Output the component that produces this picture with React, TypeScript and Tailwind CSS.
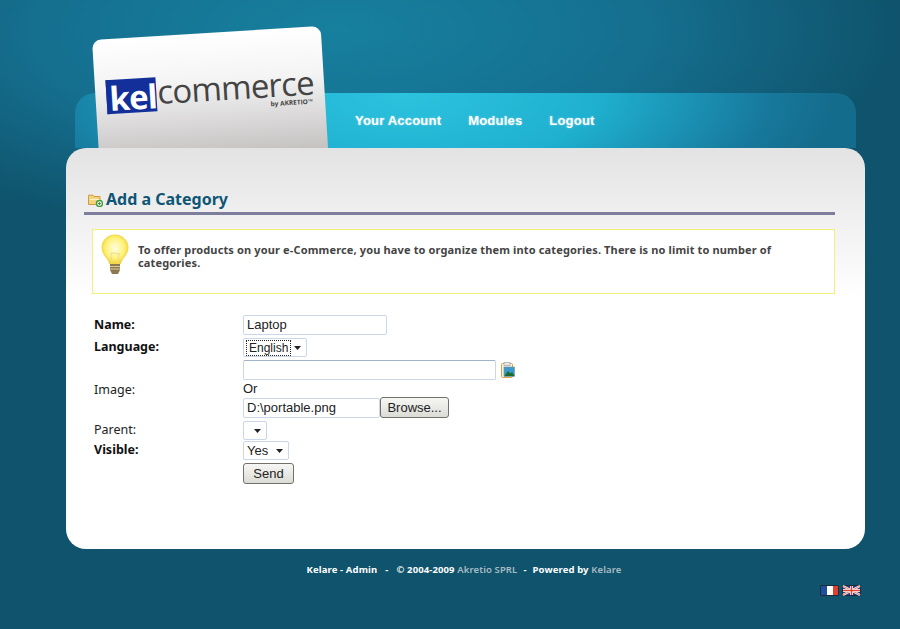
const tahoma = "font-['Noto_Sans','Liberation_Sans',sans-serif]";

function Caret() {
  return (
    <svg width="7" height="4" viewBox="0 0 7 4" className="shrink-0">
      <path d="M0 0h7L3.5 4z" fill="#222" />
    </svg>
  );
}

function SelectBox({ value, focused, className }: { value?: string; focused?: boolean; className: string }) {
  return (
    <div className={`flex h-[19px] items-center justify-between rounded-[2px] border border-[#c9d7e8] bg-white pl-[2px] pr-[5px] text-[13px] leading-none text-[#222] ${className}`}>
      <span className={focused ? "border border-dotted border-[#222] px-[2px] py-[1px] text-[12px]" : "px-[1px]"}>{value}</span>
      <Caret />
    </div>
  );
}

function GreyButton({ label, className }: { label: string; className: string }) {
  return (
    <button
      type="button"
      className={`rounded-[3px] border border-[#70706c] bg-[linear-gradient(#f6f6f4,#dcdcd6)] text-[13px] leading-none text-[#222] ${className}`}
    >
      {label}
    </button>
  );
}

function FolderIcon() {
  return (
    <svg width="15" height="13" viewBox="0 0 15 13" className="mt-[3px] shrink-0">
      <path d="M.5 2.5V1.2h4.5l1 1.3h6v8H.5z" fill="#f5d27c" stroke="#d09a3c" />
      <path d="M1.5 5h10v1H1.5z" fill="#fff3c8" />
      <circle cx="11.5" cy="9.5" r="3" fill="#fff" stroke="#3f9a3a" strokeWidth="1.4" />
      <path d="M11.5 8v3M10 9.5h3" stroke="#3f9a3a" />
    </svg>
  );
}

function BulbIcon() {
  return (
    <svg width="28" height="42" viewBox="0 0 28 42" className="shrink-0">
      <defs>
        <radialGradient id="bulb" cx="50%" cy="45%" r="55%">
          <stop offset="0%" stopColor="#fffde0" />
          <stop offset="65%" stopColor="#fff27a" />
          <stop offset="100%" stopColor="#f0d030" />
        </radialGradient>
      </defs>
      <path
        d="M14 1C6.500 1 1 6.500 1 13.500c0 5 2.500 7.500 5 11 1.500 2 2 3.500 2.500 5.500h11c.5-2 1-3.500 2.500-5.500 2.500-3.500 5-6 5-11C27 6.500 21.500 1 14 1z"
        fill="url(#bulb)"
        stroke="#f3da4a"
      />
      <path d="M11 30l-1-11M17 30l1-11M10 19c1.500 1.500 2.500-1 4 0s2.500 1.500 4 0" fill="none" stroke="#e8dc9a" />
      <path d="M9 30h10v6l-2 4h-6l-2-4z" fill="#8d7a52" />
      <path d="M9 32.500h10M9 35h10" stroke="#d8c894" />
    </svg>
  );
}

function ImagePickIcon() {
  return (
    <svg width="14" height="16" viewBox="0 0 14 16" className="shrink-0">
      <rect x=".5" y="1.500" width="11" height="14" rx="1" fill="#f3f0e2" stroke="#d9a64a" />
      <rect x="3" y=".5" width="6" height="3" fill="#e8e8e8" stroke="#999" strokeWidth=".6" />
      <rect x="3" y="5" width="10.500" height="9.500" fill="#3a9ad0" stroke="#7d8f88" strokeWidth=".6" />
      <path d="M3.500 14l3.500-5 2.500 2.500 1.500-1.500 2.500 4z" fill="#1e6a2c" />
    </svg>
  );
}

function Flags() {
  return (
    <div className="flex justify-end gap-[3px] pr-[4px]">
      <svg width="19" height="11" viewBox="0 0 19 11">
        <rect width="19" height="11" rx="1.500" fill="#1d2a3c" />
        <rect x="1" y="1" width="6" height="9" fill="#1c4fa0" />
        <rect x="7" y="1" width="6" height="9" fill="#fff" />
        <rect x="13" y="1" width="5" height="9" fill="#e0402c" />
      </svg>
      <svg width="19" height="11" viewBox="0 0 19 11">
        <rect width="19" height="11" rx="1.500" fill="#1d2a3c" />
        <rect x="1" y="1" width="17" height="9" fill="#2a3f80" />
        <path d="M1 1l17 9M18 1L1 10" stroke="#fff" strokeWidth="2" />
        <path d="M1 1l17 9M18 1L1 10" stroke="#e0402c" strokeWidth=".7" />
        <path d="M9.500 1v9M1 5.500h17" stroke="#fff" strokeWidth="3" />
        <path d="M9.500 1v9M1 5.500h17" stroke="#e0402c" strokeWidth="1.500" />
      </svg>
    </div>
  );
}

function LogoCard() {
  return (
    <div className="absolute left-[26px] top-[-53px] h-[135px] w-[229px] origin-top-left -rotate-[3.5deg] rounded-t-[9px] bg-[linear-gradient(#ffffff_0%,#f4f4f4_35%,#bdb9b9_100%)] pl-[11px] pt-[41px]">
      <div className="flex items-start">
        <div className="flex h-[34px] w-[50px] items-end justify-center border-l-[3px] border-[#13309a] bg-[#13309a] font-['Open_Sans',sans-serif] text-[33px] font-bold leading-[31px] tracking-[-1px] text-white">
          kel
        </div>
        <div className="ml-[1px]">
          <div className="font-['Open_Sans',sans-serif] text-[33px] font-medium leading-[30px] tracking-[-0.8px] text-[#444]">commerce</div>
          <div className="pr-[2px] text-right font-['Open_Sans',sans-serif] text-[6.500px] font-bold leading-[8px] text-[#444]">by AKRETIO™</div>
        </div>
      </div>
    </div>
  );
}

function NavBar() {
  return (
    <div className="mx-[9px] flex h-[55px] items-center gap-[27px] rounded-t-[20px] bg-[radial-gradient(ellipse_430px_170px_at_330px_0px,#2cc3df_0%,#1fb0cf_45%,#17789c_85%,#146c8c_100%)] pl-[280px] font-['Liberation_Sans',sans-serif] text-[13px] font-bold tracking-[0.2px] text-white [text-shadow:0_0_2px_rgba(255,255,255,0.5)]">
      <a>Your Account</a>
      <a>Modules</a>
      <a>Logout</a>
    </div>
  );
}

function CategoryForm() {
  return (
    <div className={`ml-[10px] mt-[20px] grid grid-cols-[149px_1fr] text-[12.5px] text-[#222] ${tahoma}`}>
      <div className="flex h-[22px] items-center font-bold text-[#111]">Name:</div>
      <div className="flex h-[22px] items-center">
        <div className="flex h-[20px] w-[144px] items-center rounded-[2px] border border-[#c9d7e8] px-[3px] font-['Liberation_Sans',sans-serif] text-[13px]">Laptop</div>
      </div>

      <div className="flex h-[24px] items-center pb-[1px] font-bold text-[#111]">Language:</div>
      <div className="flex h-[24px] items-start pt-[2px] font-['Liberation_Sans',sans-serif]">
        <SelectBox value="English" focused className="w-[64px] border-[#9dbbd8]" />
      </div>

      <div className="flex items-center pt-[3px]">Image:</div>
      <div className="flex flex-col">
        <div className="flex items-center gap-[5px]">
          <div className="h-[20px] w-[253px] rounded-[2px] border border-[#c9d7e8] border-t-[#9fb2c6]" />
          <ImagePickIcon />
        </div>
        <div className="h-[17px] font-['Liberation_Sans',sans-serif] text-[13px] leading-[17px]">Or</div>
        <div className="flex h-[21px] items-center font-['Liberation_Sans',sans-serif]">
          <div className="flex h-[20px] w-[137px] items-center rounded-[2px] border border-[#c9d7e8] px-[3px] text-[13px]">D:\portable.png</div>
          <GreyButton label="Browse..." className="h-[21px] w-[69px]" />
        </div>
      </div>

      <div className="flex h-[22px] items-end">Parent:</div>
      <div className="flex h-[22px] items-end font-['Liberation_Sans',sans-serif]">
        <SelectBox className="w-[24px]" />
      </div>

      <div className="flex h-[21px] items-center font-bold text-[#111]">Visible:</div>
      <div className="flex h-[21px] items-center font-['Liberation_Sans',sans-serif]">
        <SelectBox value="Yes" className="w-[46px]" />
      </div>

      <div />
      <div className="pt-[2px] font-['Liberation_Sans',sans-serif]">
        <GreyButton label="Send" className="h-[21px] w-[51px]" />
      </div>
    </div>
  );
}

export default function App() {
  return (
    <div className="min-h-[629px] overflow-hidden bg-[#0f536c] bg-[radial-gradient(ellipse_560px_210px_at_340px_30px,#17809f_0%,#156f8f_55%,#0f536c_100%)] pt-[93px]">
      <div className="relative ml-[66px] w-[799px]">
        <NavBar />
        <LogoCard />
        <div className="relative h-[401px] rounded-[20px] bg-[linear-gradient(#e3e3e3_0px,#ffffff_150px)] pl-[18px] pr-[30px] pt-[40px]">
          <div className="flex items-center gap-[3px] border-b-[3px] border-[#7d7d9c] pb-[2px] pl-[4px]">
            <FolderIcon />
            <h1 className={`text-[16px] font-bold leading-[22px] text-[#0f5575] ${tahoma}`}>Add a Category</h1>
          </div>
          <div className="ml-[8px] mt-[14px] flex h-[65px] items-start gap-[9px] border border-[#f3f07a] bg-white pl-[8px] pt-[4px]">
            <BulbIcon />
            <p className={`mt-[9px] w-[650px] text-[11px] font-bold leading-[13px] tracking-[0.14px] text-[#444] ${tahoma}`}>
              To offer products on your e-Commerce, you have to organize them into categories. There is no limit to number of categories.
            </p>
          </div>
          <CategoryForm />
        </div>
        <p className={`mt-[14px] pr-[3px] text-center text-[9.500px] font-bold leading-[13px] tracking-[0.12px] text-white ${tahoma}`}>
          Kelare - Admin<span className="mx-[8px]">-</span>© 2004-2009 <span className="font-semibold text-[#a9bcc6]">Akretio SPRL</span>
          <span className="mx-[6px]">-</span>Powered by <span className="font-semibold text-[#a9bcc6]">Kelare</span>
        </p>
        <div className="mt-[9px]">
          <Flags />
        </div>
      </div>
    </div>
  );
}
